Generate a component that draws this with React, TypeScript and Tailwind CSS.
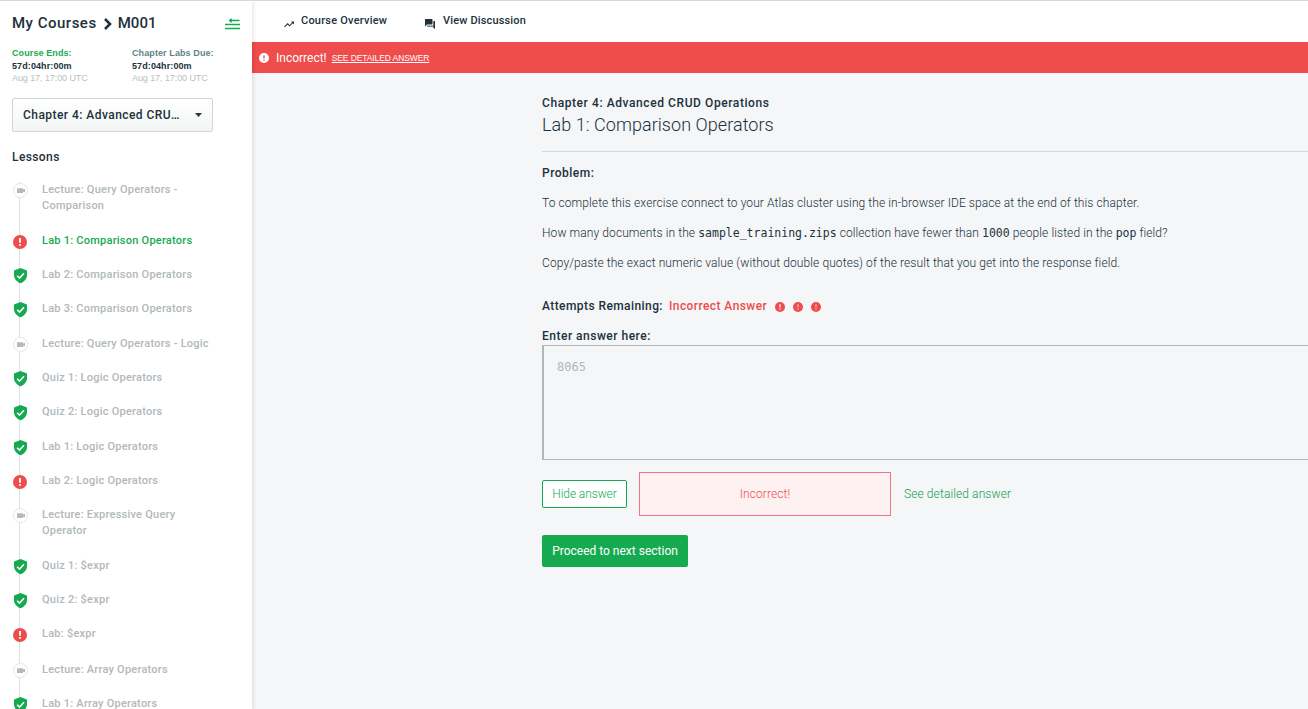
import React from "react";

type Status = "video" | "fail" | "pass";

interface Lesson {
  title: string;
  status: Status;
  height: string;
  active?: boolean;
}

const lessons: Lesson[] = [
  { title: "Lecture: Query Operators - Comparison", status: "video", height: "h-[51px]" },
  { title: "Lab 1: Comparison Operators", status: "fail", height: "h-[34px]", active: true },
  { title: "Lab 2: Comparison Operators", status: "pass", height: "h-[34px]" },
  { title: "Lab 3: Comparison Operators", status: "pass", height: "h-[35px]" },
  { title: "Lecture: Query Operators - Logic", status: "video", height: "h-[34px]" },
  { title: "Quiz 1: Logic Operators", status: "pass", height: "h-[34px]" },
  { title: "Quiz 2: Logic Operators", status: "pass", height: "h-[35px]" },
  { title: "Lab 1: Logic Operators", status: "pass", height: "h-[34px]" },
  { title: "Lab 2: Logic Operators", status: "fail", height: "h-[34px]" },
  { title: "Lecture: Expressive Query Operator", status: "video", height: "h-[51px]" },
  { title: "Quiz 1: $expr", status: "pass", height: "h-[34px]" },
  { title: "Quiz 2: $expr", status: "pass", height: "h-[34px]" },
  { title: "Lab: $expr", status: "fail", height: "h-[36px]" },
  { title: "Lecture: Array Operators", status: "video", height: "h-[34px]" },
  { title: "Lab 1: Array Operators", status: "pass", height: "h-[34px]" },
];

function Alert({ className, mark }: { className: string; mark: string }) {
  return (
    <svg viewBox="0 0 14 14" className={className}>
      <circle cx="7" cy="7" r="7" fill="currentColor" />
      <path d="M6.1 3h1.8v4.8H6.1zM6.1 9h1.8v1.8H6.1z" fill={mark} />
    </svg>
  );
}

function StatusIcon({ status }: { status: Status }) {
  if (status === "fail") {
    return <Alert className="mt-[1.5px] ml-[1.4px] h-[14px] w-[14px] text-[#ef4c4c]" mark="#fff" />;
  }
  if (status === "pass") {
    return (
      <svg viewBox="0 0 15 16" className="mt-[1px] ml-[1px] h-[16px] w-[15px]">
        <path d="M7.5 0 14 2.6V7C14 10.9 11.2 14 7.5 15.2 3.8 14 1 10.9 1 7V2.6Z" fill="#16aa50" />
        <path d="M4.1 7.8 6.5 10.1 11 5.3" fill="none" stroke="#fff" strokeWidth="1.5" />
      </svg>
    );
  }
  return (
    <svg viewBox="0 0 16 16" className="ml-[1px] h-[16px] w-[16px]">
      <circle cx="7.5" cy="8.5" r="7" fill="#fff" stroke="#e3e7e7" />
      <path d="M4 6.2h6v1.3l2-0.7v3.6l-2-0.7V11H4z" fill="#b3babd" />
    </svg>
  );
}

function LessonRow({ lesson }: { lesson: Lesson }) {
  return (
    <li className={`flex shrink-0 ${lesson.height}`}>
      <div className="relative flex w-[30px] shrink-0 items-start">
        <span className="absolute inset-y-0 left-[7px] w-px bg-[#dde1e1]" />
        <span className="relative flex">
          <StatusIcon status={lesson.status} />
        </span>
      </div>
      <span
        className={`w-[172px] text-[11px] leading-[16px] font-medium tracking-[0.24px] ${
          lesson.active ? "text-[#13aa52]" : "text-[#b1b8bb]"
        }`}
      >
        {lesson.title}
      </span>
    </li>
  );
}

function Deadline({ label, color }: { label: string; color: string }) {
  return (
    <div className="w-[120px] shrink-0 font-['Liberation_Sans',sans-serif] whitespace-nowrap">
      <div className={`text-[9px] leading-[13px] font-bold tracking-[0.1px] ${color}`}>{label}</div>
      <div className="text-[9px] leading-[13px] font-bold tracking-[0.1px] text-[#21313c]">57d:04hr:00m</div>
      <div className="text-[9px] leading-[11px] tracking-[-0.08px] text-[#b8c0c2]">Aug 17, 17:00 UTC</div>
    </div>
  );
}

function Sidebar() {
  return (
    <aside className="relative z-10 flex w-[252px] shrink-0 flex-col overflow-hidden bg-white pl-[12px] shadow-[1px_0_4px_rgba(0,0,0,0.12)]">
      <div className="flex h-[43px] shrink-0 items-center justify-between pr-[12px]">
        <div className="mt-[2px] flex items-center text-[15px] font-medium tracking-[0.5px] text-[#21313c]">
          <span>My Courses</span>
          <svg viewBox="0 0 8 12" className="mr-[6px] ml-[7px] h-[12px] w-[8px]">
            <path d="M1 1 6 6 1 11" fill="none" stroke="currentColor" strokeWidth="2.6" />
          </svg>
          <span className="tracking-[0.1px]">M001</span>
        </div>
        <svg viewBox="0 0 15 12" className="mt-[3px] h-[12px] w-[15px]" fill="none" stroke="#13aa52" strokeWidth="1.3">
          <path d="M4.5 2.5H14.5M6.6 0.8 4.6 2.5 6.6 4.2M0 6.5H15M0 10.5H15" />
        </svg>
      </div>
      <div className="mt-[3px] flex shrink-0">
        <Deadline label="Course Ends:" color="text-[#13aa52]" />
        <Deadline label="Chapter Labs Due:" color="text-[#61828b]" />
      </div>
      <button className="mt-[14px] flex h-[34px] w-[201px] shrink-0 items-center justify-between rounded-[2px] border border-[#d0d5d5] bg-linear-to-b from-white to-[#f3f5f5] pr-[10px] pl-[10px] text-[12px] font-medium tracking-[0.45px] text-[#21313c]">
        <span>Chapter 4: Advanced CRU…</span>
        <svg viewBox="0 0 7 4" className="h-[4px] w-[7px]">
          <path d="M0 0h7L3.5 4z" fill="#30373a" />
        </svg>
      </button>
      <h2 className="mt-[17px] shrink-0 text-[12px] leading-[16px] font-medium tracking-[0.4px] text-[#21313c]">
        Lessons
      </h2>
      <ul className="mt-[17px] flex flex-col">
        {lessons.map((lesson) => (
          <LessonRow key={lesson.title} lesson={lesson} />
        ))}
      </ul>
    </aside>
  );
}

function TopNav() {
  return (
    <nav className="flex h-[41px] shrink-0 items-start bg-white pt-[12px] pl-[32px] text-[11px] leading-[16px] font-medium tracking-[0.22px] text-[#21313c]">
      <svg viewBox="0 0 12 12" className="mt-[5px] mr-[6px] h-[12px] w-[11px]" fill="none" stroke="#21313c" strokeWidth="1.1">
        <path d="M0.6 9.2 4 5.8 6.2 8 10 4" />
        <path d="M7.6 3.2H10.9V6.5Z" fill="#21313c" stroke="none" />
      </svg>
      <span className="w-[87px] whitespace-nowrap">Course Overview</span>
      <svg viewBox="0 0 24 24" className="mt-[5px] mr-[7px] ml-[36px] h-[12px] w-[12px]">
        <path fill="#72808a" d="M21 6h-2v9H6v2c0 .55.45 1 1 1h11l4 4V7c0-.55-.45-1-1-1z" />
        <path fill="#21313c" d="M17 12V3c0-.55-.45-1-1-1H3c-.55 0-1 .45-1 1v14l4-4h10c.55 0 1-.45 1-1z" />
        <path fill="#21313c" d="M19 6h2c.55 0 1 .45 1 1v15l-3-3z" />
      </svg>
      <span className="tracking-[0.15px] whitespace-nowrap">View Discussion</span>
    </nav>
  );
}

function ErrorBanner() {
  return (
    <div className="flex h-[31px] shrink-0 items-center bg-[#ef4c4c] pl-[7px] text-white">
      <Alert className="h-[10px] w-[10px]" mark="#ef4c4c" />
      <span className="ml-[7px] text-[12px]">Incorrect!</span>
      <a className="mt-px ml-[5px] font-['Liberation_Sans',sans-serif] text-[8.5px] tracking-[-0.1px] underline underline-offset-1">
        SEE DETAILED ANSWER
      </a>
    </div>
  );
}

function Code({ children }: { children: React.ReactNode }) {
  return (
    <code className="font-['DejaVu_Sans_Mono',monospace] text-[11.5px] leading-none tracking-normal text-[#21313c]">
      {children}
    </code>
  );
}

function LabContent() {
  return (
    <main className="flex flex-1 flex-col overflow-hidden pt-[22px] pl-[290px] text-[12px] text-[#21313c]">
      <div className="leading-[16px] font-medium tracking-[0.58px]">Chapter 4: Advanced CRUD Operations</div>
      <h1 className="mt-[2px] text-[18px] leading-[24px] font-light tracking-[0.05px]">Lab 1: Comparison Operators</h1>
      <hr className="mt-[14px] border-[#ced9d9]" />
      <div className="mt-[13px] leading-[16px] font-medium tracking-[0.5px]">Problem:</div>
      <div className="mt-[14px] flex flex-col gap-[14px] leading-[16px] font-light tracking-[0.09px] whitespace-nowrap">
        <p className="h-[16px]">
          To complete this exercise connect to your Atlas cluster using the in-browser IDE space at the end of this chapter.
        </p>
        <p className="h-[16px]">
          How many documents in the <Code>sample_training.zips</Code> collection have fewer than <Code>1000</Code> people
          listed in the <Code>pop</Code> field?
        </p>
        <p className="h-[16px]">
          Copy/paste the exact numeric value (without double quotes) of the result that you get into the response field.
        </p>
      </div>
      <div className="mt-[27px] flex items-center leading-[16px] font-medium tracking-[0.42px]">
        <span>Attempts Remaining:</span>
        <span className="ml-[6px] text-[#ef4c4c]">Incorrect Answer</span>
        <div className="mt-[2px] ml-[8px] flex gap-[8px] text-[#ef4c4c]">
          <Alert className="h-[10px] w-[10px]" mark="#fff" />
          <Alert className="h-[10px] w-[10px]" mark="#f9b5b5" />
          <Alert className="h-[10px] w-[10px]" mark="#f9b5b5" />
        </div>
      </div>
      <label className="mt-[14px] leading-[16px] font-medium tracking-[0.5px]">Enter answer here:</label>
      <div className="mt-[1px] h-[115px] shrink-0 border-y border-l-2 border-[#b0b7bb] pt-[13px] pl-[13px] font-['DejaVu_Sans_Mono',monospace] text-[12px] leading-[16px] text-[#b0b7bb]">
        8065
      </div>
      <div className="mt-[12px] flex h-[44px] shrink-0 items-center font-light tracking-[0.1px] whitespace-nowrap">
        <button className="h-[28px] w-[85px] rounded-[2px] border border-[#13aa52] bg-white tracking-[-0.1px] text-[#13aa52]">
          Hide answer
        </button>
        <div className="ml-[12px] flex h-[44px] w-[252px] items-center justify-center border border-[#f27489] bg-[#fef1f1] text-[#ef4c4c]">
          Incorrect!
        </div>
        <a className="ml-[13px] text-[#13a050]">See detailed answer</a>
      </div>
      <button className="mt-[19px] h-[32px] w-[146px] shrink-0 rounded-[2px] bg-[#16aa50] tracking-[0px] whitespace-nowrap text-white">
        Proceed to next section
      </button>
    </main>
  );
}

export default function App() {
  return (
    <div className="flex h-[709px] w-[1308px] overflow-hidden border-t border-[#d5d9d9] bg-[#f4f6f8] font-['Roboto',sans-serif]">
      <Sidebar />
      <div className="flex min-w-0 flex-1 flex-col">
        <TopNav />
        <ErrorBanner />
        <LabContent />
      </div>
    </div>
  );
}
